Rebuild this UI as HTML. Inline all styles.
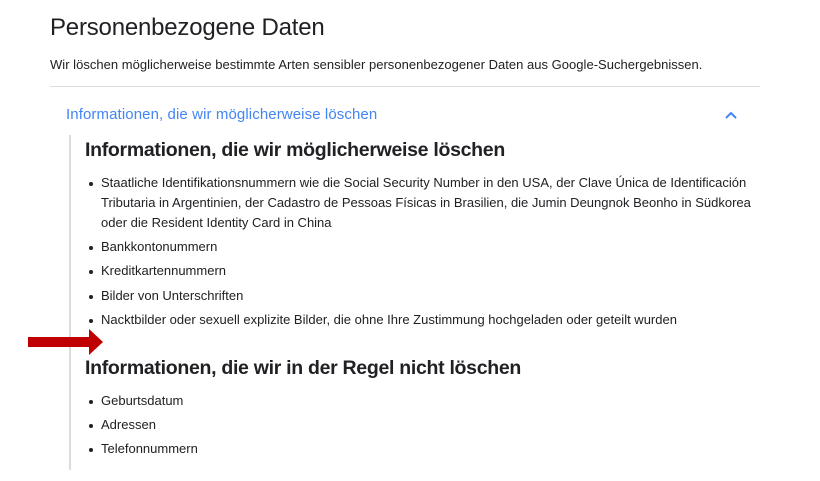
<!DOCTYPE html>
<html><head><meta charset="utf-8"><style>
body{margin:0;width:820px;height:481px;background:#fff;font-family:"Liberation Sans",sans-serif;color:#202124;position:relative;overflow:hidden}
.a{position:absolute;white-space:nowrap}
h1{position:absolute;left:50px;top:14px;margin:0;font-weight:400;font-size:24px;letter-spacing:-0.2px}
.sub{left:50px;top:57px;font-size:13px;letter-spacing:0.02px}
.hr{position:absolute;left:50px;top:86px;width:710px;height:1px;background:#dadce0}
.link{left:66px;top:106px;font-size:15px;color:#4285f4;letter-spacing:0.1px}
.bar{position:absolute;left:69px;top:135px;width:2px;height:335px;background:#dadce0}
h2{position:absolute;left:85px;margin:0;font-size:19.5px;font-weight:700;letter-spacing:-0.3px;color:#202124}
.li{left:101px;font-size:13px;letter-spacing:0px;line-height:20px}
.li:before{content:"";position:absolute;left:-12px;top:9px;width:4px;height:4px;border-radius:50%;background:#202124}
</style></head><body>
<h1>Personenbezogene Daten</h1>
<div class="a sub">Wir löschen möglicherweise bestimmte Arten sensibler personenbezogener Daten aus Google-Suchergebnissen.</div>
<div class="hr"></div>
<div class="a link">Informationen, die wir möglicherweise löschen</div>
<svg class="a" style="left:724px;top:110px" width="14" height="10" viewBox="0 0 14 10"><path d="M2 8 L7 3 L12 8" stroke="#4285f4" stroke-width="2" fill="none"/></svg>
<div class="bar"></div>
<h2 style="top:139px">Informationen, die wir möglicherweise löschen</h2>
<div class="a li" style="top:173px">Staatliche Identifikationsnummern wie die Social Security Number in den USA, der Clave Única de Identificación<br>Tributaria in Argentinien, der Cadastro de Pessoas Físicas in Brasilien, die Jumin Deungnok Beonho in Südkorea<br>oder die Resident Identity Card in China</div>
<div class="a li" style="top:237px">Bankkontonummern</div>
<div class="a li" style="top:261px">Kreditkartennummern</div>
<div class="a li" style="top:286px">Bilder von Unterschriften</div>
<div class="a li" style="top:310px">Nacktbilder oder sexuell explizite Bilder, die ohne Ihre Zustimmung hochgeladen oder geteilt wurden</div>
<svg class="a" style="left:27px;top:328px" width="78" height="28" viewBox="0 0 78 28"><path d="M1 9 H62 V1 L76 14 L62 27 V19 H1 Z" fill="#c00000"/></svg>
<h2 style="top:357px">Informationen, die wir in der Regel nicht löschen</h2>
<div class="a li" style="top:391px">Geburtsdatum</div>
<div class="a li" style="top:415px">Adressen</div>
<div class="a li" style="top:439px">Telefonnummern</div>
</body></html>
